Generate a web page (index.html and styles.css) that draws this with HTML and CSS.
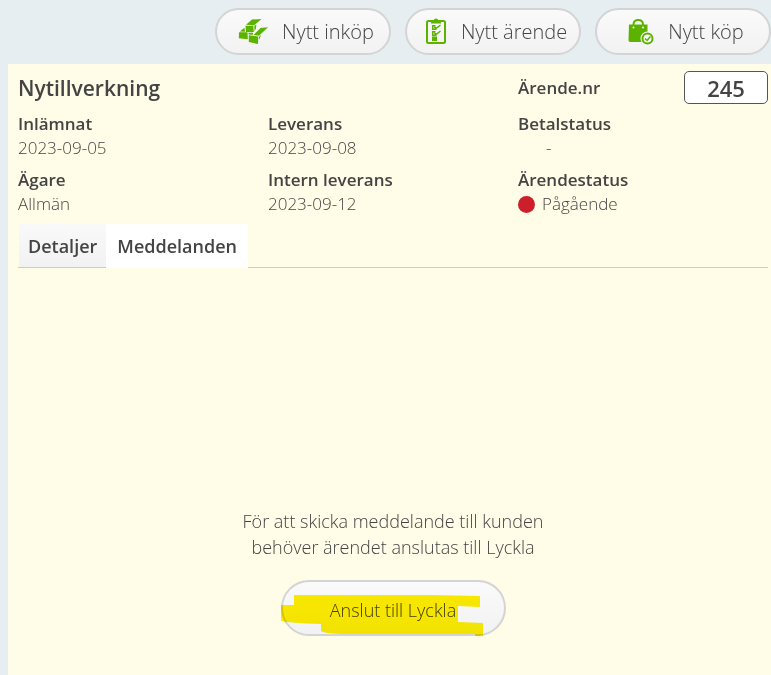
FILE: index.html
```html
<!DOCTYPE html>
<html lang="sv">
<head>
<meta charset="utf-8">
<meta name="viewport" content="width=device-width, initial-scale=1">
<title>Nytillverkning</title>
<link rel="stylesheet" href="styles.css">
</head>
<body>
<nav class="toolbar">
  <button class="pill" type="button">
    <svg class="icon icon-wide" viewBox="0 0 30 28" aria-hidden="true">
      <path d="M8 6.800L14 1.500L23.500 1L16.300 7.200Z M7.500 7.800H15.300L15.800 14H8Z M16.300 8L18.300 6.500L18 10.500L16.500 13Z M15.500 17L22.500 10L30 9.200L21 17.800Z M1 14.300H9.500L9.800 21.300L0.800 20.300Z M1.800 13.500L6.500 9.800L7 13.700Z M10.800 17.300L20.300 18.500L20 26L10.800 24Z M10.300 14.800H15L15 16.800L10.800 16.400Z M21 18.700L23 17L21.200 22Z"/>
    </svg>
    <span>Nytt inköp</span>
  </button>
  <button class="pill" type="button">
    <svg class="icon icon-narrow" viewBox="0 0 22 28" aria-hidden="true">
      <rect class="line" x="2" y="3" width="18" height="22" rx="1.500"/>
      <path d="M6 2H9Q9 0.500 11 0.500T13 2H16V5.500H6Z M7 18.500H12V23H7Z"/>
      <path class="line thin" d="M10.500 7.700H7.700V11.300H11.500M9.300 8.800L11 10.500L15.500 7M10.500 13.700H7.700V17.300H11.500M9.300 14.800L11 16.500L15.500 13"/>
    </svg>
    <span>Nytt ärende</span>
  </button>
  <button class="pill" type="button">
    <svg class="icon" viewBox="0 0 26 28" aria-hidden="true">
      <path d="M1 6.500H19.500V16L14 24H2Q0.500 24 0.500 22Z"/>
      <path class="line" d="M5.500 8V6Q6 2 10.300 2T15 6V8"/>
      <circle class="dot" cx="5.500" cy="9.500" r="1"/><circle class="dot" cx="15" cy="9.500" r="1"/>
      <circle class="dot" cx="19.500" cy="20.500" r="7"/>
      <circle class="line" cx="19.500" cy="20.500" r="5"/>
      <path class="line thin" d="M17 20.500L19 22.500L22.500 18.500"/>
    </svg>
    <span>Nytt köp</span>
  </button>
</nav>

<main class="panel">
  <header class="head">
    <h1>Nytillverkning</h1>
    <label class="strong" for="nr">Ärende.nr</label>
    <input id="nr" class="number" type="text" value="245">
  </header>

  <dl class="facts">
    <div><dt>Inlämnat</dt><dd>2023-09-05</dd></div>
    <div><dt>Leverans</dt><dd>2023-09-08</dd></div>
    <div><dt>Betalstatus</dt><dd class="empty">-</dd></div>
    <div><dt>Ägare</dt><dd>Allmän</dd></div>
    <div><dt>Intern leverans</dt><dd>2023-09-12</dd></div>
    <div><dt>Ärendestatus</dt><dd class="status">Pågående</dd></div>
  </dl>

  <div class="tabs" role="tablist">
    <button class="tab" type="button" role="tab" aria-selected="false">Detaljer</button>
    <button class="tab active" type="button" role="tab" aria-selected="true">Meddelanden</button>
  </div>

  <section class="messages">
    <p>För att skicka meddelande till kunden<br>behöver ärendet anslutas till Lyckla</p>
    <button class="pill connect" type="button">Anslut till Lyckla
      <svg class="marker" viewBox="0 0 225 56" aria-hidden="true">
        <path d="M13 15H150L199 16V27L177 26V42L202 43V56H194V54H66Q44 54 40 51V44Q8 43 0 41V25H13Z"/>
      </svg>
    </button>
  </section>
</main>
</body>
</html>
```
FILE: styles.css
```css
* { box-sizing: border-box; }

body {
  margin: 0;
  min-height: 100vh;
  display: flex;
  flex-direction: column;
  background: #e6eef2;
  color: #444;
  font-family: "Open Sans", "Noto Sans", sans-serif;
  font-size: 17px;
  font-weight: 300;
  line-height: 24px;
}

button, input { font: inherit; color: inherit; }

.toolbar {
  display: flex;
  justify-content: flex-end;
  gap: 14px;
  padding: 8px 0 9px;
}

.pill {
  display: flex;
  align-items: center;
  justify-content: center;
  gap: 14px;
  width: 176px;
  height: 47px;
  padding: 0 0 0 6px;
  border: 2px solid #d4d4d4;
  border-radius: 28px;
  background: linear-gradient(#fafafa, #f2f2f2);
  font-size: 20px;
}

.icon { width: 26px; height: 28px; fill: #5bb300; }
.icon-wide { width: 30px; }
.icon-narrow { width: 22px; }
.line { fill: none; stroke: #5bb300; stroke-width: 2; }
.thin { stroke-width: 1.5; }
.dot { fill: #f7f7f7; }

.panel {
  flex: 1;
  margin-left: 8px;
  padding: 7px 3px 0 10px;
  background: #fffce8;
}

.head {
  display: grid;
  grid-template-columns: 2fr calc(100% / 3 - 84px) 84px;
  align-items: center;
}

h1 {
  margin: 0;
  font-size: 21px;
  font-weight: 600;
  line-height: 32px;
}

.strong, dt { font-weight: 600; }

.number {
  width: 100%;
  height: 33px;
  padding: 0;
  border: 1px solid #555;
  border-radius: 5px;
  background: #fff;
  font-size: 22px;
  font-weight: 600;
  text-align: center;
}

.facts {
  display: grid;
  grid-template-columns: 1fr 1fr 1fr;
  margin: 8px 0;
  row-gap: 8px;
}

dd { margin: 0; }
.empty { padding-left: 28px; }

.status {
  display: flex;
  align-items: center;
  gap: 7px;
}

.status::before {
  content: "";
  width: 17px;
  height: 17px;
  border-radius: 50%;
  background: #cc1f2a;
}

.tabs {
  display: flex;
  border-bottom: 1px solid #ccc;
  padding-left: 1px;
}

.tab {
  height: 43px;
  padding: 0 9px;
  border: 0;
  background: linear-gradient(#f9f9f9, #f2f2f2);
  font-size: 18px;
  font-weight: 600;
}

.tab.active {
  margin-bottom: -1px;
  height: 44px;
  padding: 0 11px;
  background: #fff;
}

.messages {
  display: flex;
  flex-direction: column;
  align-items: center;
  padding-top: 240px;
}

.messages p {
  margin: 0 0 20px;
  font-size: 18px;
  line-height: 26px;
  text-align: center;
}

.connect {
  position: relative;
  width: 225px;
  height: 56px;
  padding: 3px 0 0;
  font-size: 18px;
}

.marker {
  position: absolute;
  inset: -2px;
  width: 225px;
  height: 56px;
  fill: #ffef00;
  mix-blend-mode: multiply;
}
```
